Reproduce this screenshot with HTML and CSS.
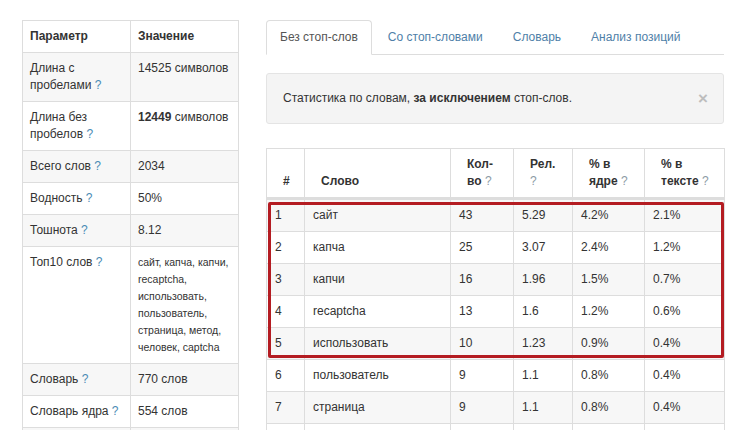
FILE: index.html
```html
<!DOCTYPE html>
<html>

<head>
  <title>Анализ текста</title>
  <link rel="stylesheet" href="styles.css">
</head>

<body>
  <div class="page">
    <div class="side">
      <table class="params">
        <tr class="header"><td>Параметр</td><td>Значение</td></tr>
        <tr class="odd"><td>Длина с пробелами <span class="hint">?</span></td><td>14525 символов</td></tr>
        <tr><td>Длина без пробелов <span class="hint">?</span></td><td><b>12449</b> символов</td></tr>
        <tr class="odd"><td>Всего слов <span class="hint">?</span></td><td>2034</td></tr>
        <tr><td>Водность <span class="hint">?</span></td><td>50%</td></tr>
        <tr class="odd"><td>Тошнота <span class="hint">?</span></td><td>8.12</td></tr>
        <tr><td>Топ10 слов <span class="hint">?</span></td>
          <td class="small">сайт, капча, капчи,<br>recaptcha,<br>использовать,<br>пользователь,<br>страница, метод,<br>человек, captcha</td></tr>
        <tr class="odd"><td>Словарь <span class="hint">?</span></td><td>770 слов</td></tr>
        <tr><td>Словарь ядра <span class="hint">?</span></td><td>554 слов</td></tr>
        <tr class="odd"><td>Ядро <span class="hint">?</span></td><td>60 слов</td></tr>
      </table>
    </div>

    <div class="content">
      <ul class="tabs">
        <li class="active"><a>Без стоп-слов</a></li>
        <li><a>Со стоп-словами</a></li>
        <li><a>Словарь</a></li>
        <li><a>Анализ позиций</a></li>
      </ul>

      <div class="alert">
        <span>Статистика по словам, <b>за исключением</b> стоп-слов.</span>
        <span class="close">&times;</span>
      </div>

      <div class="words_wrap">
        <table class="words">
          <colgroup>
            <col style="width:38px"><col style="width:146px"><col style="width:63px">
            <col style="width:59px"><col style="width:72px"><col style="width:80px">
          </colgroup>
          <thead>
            <tr><th>#</th><th>Слово</th><th>Кол-<br>во <span class="hint">?</span></th><th>Рел.<br><span class="hint">?</span></th><th>% в<br>ядре <span class="hint">?</span></th><th>% в<br>тексте <span class="hint">?</span></th></tr>
          </thead>
          <tbody>
            <tr class="odd"><td>1</td><td>сайт</td><td>43</td><td>5.29</td><td>4.2%</td><td>2.1%</td></tr>
            <tr><td>2</td><td>капча</td><td>25</td><td>3.07</td><td>2.4%</td><td>1.2%</td></tr>
            <tr class="odd"><td>3</td><td>капчи</td><td>16</td><td>1.96</td><td>1.5%</td><td>0.7%</td></tr>
            <tr><td>4</td><td>recaptcha</td><td>13</td><td>1.6</td><td>1.2%</td><td>0.6%</td></tr>
            <tr class="odd"><td>5</td><td>использовать</td><td>10</td><td>1.23</td><td>0.9%</td><td>0.4%</td></tr>
            <tr><td>6</td><td>пользователь</td><td>9</td><td>1.1</td><td>0.8%</td><td>0.4%</td></tr>
            <tr class="odd"><td>7</td><td>страница</td><td>9</td><td>1.1</td><td>0.8%</td><td>0.4%</td></tr>
            <tr><td>8</td><td>метод</td><td>8</td><td>0.98</td><td>0.7%</td><td>0.3%</td></tr>
          </tbody>
        </table>
        <div class="marker"></div>
      </div>
    </div>
  </div>
</body>

</html>
```

FILE: styles.css
```css
body {
  margin: 0;
  font-family: "Liberation Sans", Arial, Helvetica, sans-serif;
  font-size: 12px;
  line-height: 17px;
  color: #333;
  background: #fff;
}

.page {
  display: flex;
  gap: 27px;
  padding: 20px 0 0 22px;
}

.side {
  width: 217px;
  flex: none;
}

.content {
  width: 458px;
  flex: none;
}

table {
  border-collapse: collapse;
  table-layout: fixed;
  font-size: 12px;
  line-height: 17px;
}

.params {
  width: 217px;
}

.params td {
  border: 1px solid #ddd;
  padding: 7px;
  vertical-align: top;
}

.params td:first-child {
  width: 93px;
}

.params .header td {
  font-weight: bold;
}

.odd td {
  background-color: #f7f7f7;
}

.params .small {
  font-size: 10.5px;
}

.hint {
  color: #4a8bb5;
}

.words .hint {
  color: #8d9ba6;
  font-weight: normal;
}

/* tabs */
.tabs {
  list-style: none;
  margin: 0;
  padding: 0;
  display: flex;
  border-bottom: 1px solid #ddd;
}

.tabs li {
  margin-bottom: -1px;
  margin-right: 2px;
}

.tabs a {
  display: block;
  padding: 8px 13px;
  border: 1px solid transparent;
  border-radius: 4px 4px 0 0;
  color: #4f7fa8;
}

.tabs .active a {
  color: #555;
  background: #fff;
  border-color: #ddd;
  border-bottom-color: #fff;
}

/* alert */
.alert {
  margin-top: 18px;
  display: flex;
  justify-content: space-between;
  align-items: center;
  padding: 16px 15px 16px 16px;
  background: #f4f4f4;
  border: 1px solid #e4e4e4;
  border-radius: 3px;
}

.close {
  font-size: 17px;
  font-weight: bold;
  color: #bdbdbd;
}

/* words table */
.words_wrap {
  position: relative;
  margin-top: 24px;
}

.words {
  width: 458px;
}

.words th,
.words td {
  border: 1px solid #ddd;
  padding: 7px 8px;
  text-align: left;
}

.words th {
  vertical-align: bottom;
  padding-left: 16px;
  border-bottom: 3px solid #ddd;
}

.words td {
  vertical-align: top;
}

.marker {
  position: absolute;
  left: 2px;
  top: 54px;
  width: 450px;
  height: 150px;
  border: 3px solid #b41c22;
  border-radius: 2px;
}
```
